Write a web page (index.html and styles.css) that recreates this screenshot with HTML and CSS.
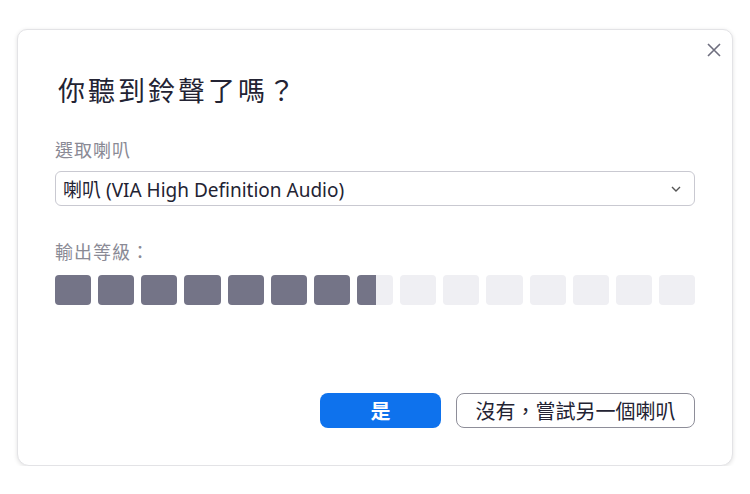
FILE: index.html
```html
<!DOCTYPE html>
<html lang="zh-Hant">
  <head>
    <meta charset="UTF-8" />
    <meta name="viewport" content="width=device-width, initial-scale=1.0" />
    <title>測試喇叭</title>
    <link rel="stylesheet" href="styles.css">
  </head>
  <body>
    <div class="dialog">
      <div class="close">
        <svg width="16" height="16" viewBox="0 0 16 16">
          <path d="M2 2 L14 14 M14 2 L2 14" stroke="#6e6e7e" stroke-width="1.6" fill="none" />
        </svg>
      </div>
      <h1 class="title">你聽到鈴聲了嗎？</h1>

      <div class="label">選取喇叭</div>
      <div class="select">
        <span>喇叭 (VIA High Definition Audio)</span>
        <svg width="10" height="6" viewBox="0 0 10 6">
          <path d="M1 1 L5 5 L9 1" stroke="#555" stroke-width="1.4" fill="none" />
        </svg>
      </div>

      <div class="label label_level">輸出等級：</div>
      <div class="levels">
        <div class="bar on"></div>
        <div class="bar on"></div>
        <div class="bar on"></div>
        <div class="bar on"></div>
        <div class="bar on"></div>
        <div class="bar on"></div>
        <div class="bar on"></div>
        <div class="bar half"></div>
        <div class="bar"></div>
        <div class="bar"></div>
        <div class="bar"></div>
        <div class="bar"></div>
        <div class="bar"></div>
        <div class="bar"></div>
        <div class="bar"></div>
      </div>

      <div class="buttons">
        <div class="btn btn_yes">是</div>
        <div class="btn btn_no">沒有，嘗試另一個喇叭</div>
      </div>
    </div>
  </body>
</html>
```

FILE: styles.css
```css
body {
  margin: 0;
  background-color: #ffffff;
  font-family: "Noto Sans", "Noto Sans CJK TC", sans-serif;
}

.dialog {
  position: relative;
  width: 716px;
  height: 437px;
  margin: 29px 0 0 17px;
  padding: 0 37px 0 37px;
  box-sizing: border-box;
  border: 1px solid #e3e3e6;
  border-radius: 10px 10px 12px 12px;
  box-shadow: 0 1px 4px rgba(0, 0, 0, 0.12);
  background-color: #ffffff;
}

.close {
  position: absolute;
  top: 11px;
  right: 10px;
  width: 16px;
  height: 16px;
}

.title {
  margin: 43px 0 0 3px;
  font-size: 27px;
  line-height: 34px;
  font-weight: 400;
  letter-spacing: 3px;
  color: #232333;
  font-family: "Noto Sans CJK TC", sans-serif;
}

.label {
  margin-top: 30px;
  font-size: 18px;
  line-height: 24px;
  letter-spacing: 1px;
  color: #8a8a95;
  font-family: "Noto Sans CJK TC", sans-serif;
}

.label_level {
  margin-top: 33px;
}

.select {
  display: flex;
  align-items: center;
  justify-content: space-between;
  height: 35px;
  margin-top: 10px;
  padding: 0 13px 0 7px;
  box-sizing: border-box;
  border: 1px solid #c9c9d1;
  border-radius: 6px;
  font-size: 19px;
  color: #232333;
}

.levels {
  display: flex;
  gap: 7px;
  margin-top: 12px;
}

.bar {
  flex: 1;
  height: 30px;
  border-radius: 4px;
  background-color: #efeff3;
}

.bar.on {
  background-color: #747487;
}

.bar.half {
  background: linear-gradient(to right, #747487 0, #747487 19px, #efeff3 19px);
}

.buttons {
  display: flex;
  justify-content: flex-end;
  gap: 15px;
  margin-top: 88px;
}

.btn {
  display: flex;
  align-items: center;
  justify-content: center;
  height: 35px;
  box-sizing: border-box;
  border-radius: 8px;
  font-size: 20px;
  font-family: "Noto Sans CJK TC", sans-serif;
  cursor: pointer;
}

.btn_yes {
  width: 121px;
  background-color: #0e72ed;
  color: #ffffff;
  font-weight: 700;
}

.btn_no {
  width: 239px;
  border: 1px solid #8e8e99;
  color: #232333;
}
```
